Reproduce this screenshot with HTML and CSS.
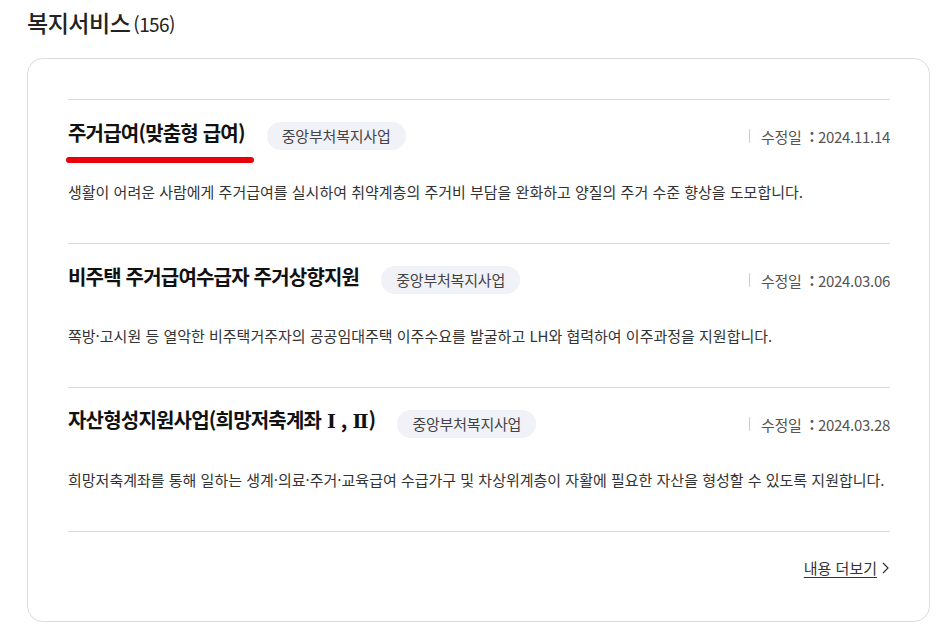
FILE: index.html
```html
<!DOCTYPE html>
<html lang="ko">
<head>
<meta charset="utf-8">
<title>복지서비스</title>
<link rel="stylesheet" href="styles.css">
</head>
<body>
<div class="page">
  <h2 class="heading">복지서비스<span class="count">(156)</span></h2>
  <div class="card">
    <ul class="list">
      <li class="item">
        <div class="item-head">
          <h3 class="title active">주거급여(맞춤형 급여)</h3>
          <span class="badge">중앙부처복지사업</span>
          <span class="date"><span class="date-label">수정일</span><span class="colon">:</span>2024.11.14</span>
        </div>
        <p class="desc">생활이 어려운 사람에게 주거급여를 실시하여 취약계층의 주거비 부담을 완화하고 양질의 주거 수준 향상을 도모합니다.</p>
      </li>
      <li class="item">
        <div class="item-head">
          <h3 class="title">비주택 주거급여수급자 주거상향지원</h3>
          <span class="badge">중앙부처복지사업</span>
          <span class="date"><span class="date-label">수정일</span><span class="colon">:</span>2024.03.06</span>
        </div>
        <p class="desc">쪽방·고시원 등 열악한 비주택거주자의 공공임대주택 이주수요를 발굴하고 LH와 협력하여 이주과정을 지원합니다.</p>
      </li>
      <li class="item">
        <div class="item-head">
          <h3 class="title">자산형성지원사업(희망저축계좌 <span class="roman">Ⅰ</span> , <span class="roman">Ⅱ</span>)</h3>
          <span class="badge">중앙부처복지사업</span>
          <span class="date"><span class="date-label">수정일</span><span class="colon">:</span>2024.03.28</span>
        </div>
        <p class="desc">희망저축계좌를 통해 일하는 생계·의료·주거·교육급여 수급가구 및 차상위계층이 자활에 필요한 자산을 형성할 수 있도록 지원합니다.</p>
      </li>
    </ul>
    <div class="more-row">
      <a class="more" href="#"><span class="more-text">내용 더보기</span><svg class="chev" width="7" height="12" viewBox="0 0 7 12"><path d="M1 1l5 5-5 5" fill="none" stroke="#333" stroke-width="1.2"/></svg></a>
    </div>
  </div>
</div>
</body>
</html>
```
FILE: styles.css
```css
* { box-sizing: border-box; }
html, body { margin: 0; padding: 0; background: #fff; }
body {
  font-family: "Noto Sans CJK KR", "Noto Sans", sans-serif;
  color: #222;
}
.page {
  padding: 5px 0 0 27px;
  width: 930px;
}
.heading {
  margin: 0;
  font-size: 23px;
  font-weight: 500;
  line-height: 34px;
  letter-spacing: -0.5px;
  color: #222;
}
.count {
  font-size: 19px;
  font-weight: 400;
  margin-left: 3px;
  letter-spacing: -0.6px;
}
.card {
  margin-top: 17px;
  width: 903px;
  border: 1px solid #dcdcdc;
  border-radius: 16px;
  padding: 40px 39px 42px 40px;
}
.list {
  list-style: none;
  margin: 0;
  padding: 0;
}
.item {
  border-top: 1px solid #dcdcdc;
  padding: 18px 0 40px;
}
.item-head {
  display: flex;
  align-items: center;
  height: 30px;
}
.title {
  position: relative;
  margin: 0;
  font-size: 20px;
  font-weight: 700;
  line-height: 30px;
  letter-spacing: -0.8px;
  color: #111;
}
.roman {
  font-family: "Liberation Serif", "DejaVu Serif", serif;
  font-size: 19px;
  margin: 0 1px;
}
.title.active::after {
  content: "";
  position: absolute;
  left: -2px;
  right: -9px;
  top: 39px;
  height: 6px;
  border-radius: 3px;
  background: #e8000b;
}
.badge {
  margin-left: 22px;
  margin-top: 6px;
  height: 28px;
  padding: 0 15px;
  border-radius: 14px;
  background: #f1f1f8;
  color: #444;
  font-size: 15px;
  line-height: 28px;
  letter-spacing: -0.2px;
}
.date {
  margin-left: auto;
  margin-top: 6px;
  display: flex;
  align-items: center;
  font-size: 15px;
  color: #555;
  letter-spacing: -0.3px;
}
.date::before {
  content: "";
  width: 1px;
  height: 14px;
  background: #ccc;
  margin-right: 11px;
}
.colon {
  font-weight: 700;
  margin: 0 4px 0 8px;
}
.desc {
  margin: 33px 0 0;
  font-size: 15px;
  line-height: 22px;
  color: #333;
  letter-spacing: 0;
}
.more-row {
  border-top: 1px solid #dcdcdc;
  padding-top: 25px;
  display: flex;
  justify-content: flex-end;
}
.more {
  display: flex;
  align-items: center;
  color: #333;
  font-size: 15px;
  line-height: 22px;
  text-decoration: none;
  margin-right: 1px;
}
.more-text {
  text-decoration: underline;
  text-underline-offset: 3px;
}
.chev {
  margin-left: 5px;
}
```
